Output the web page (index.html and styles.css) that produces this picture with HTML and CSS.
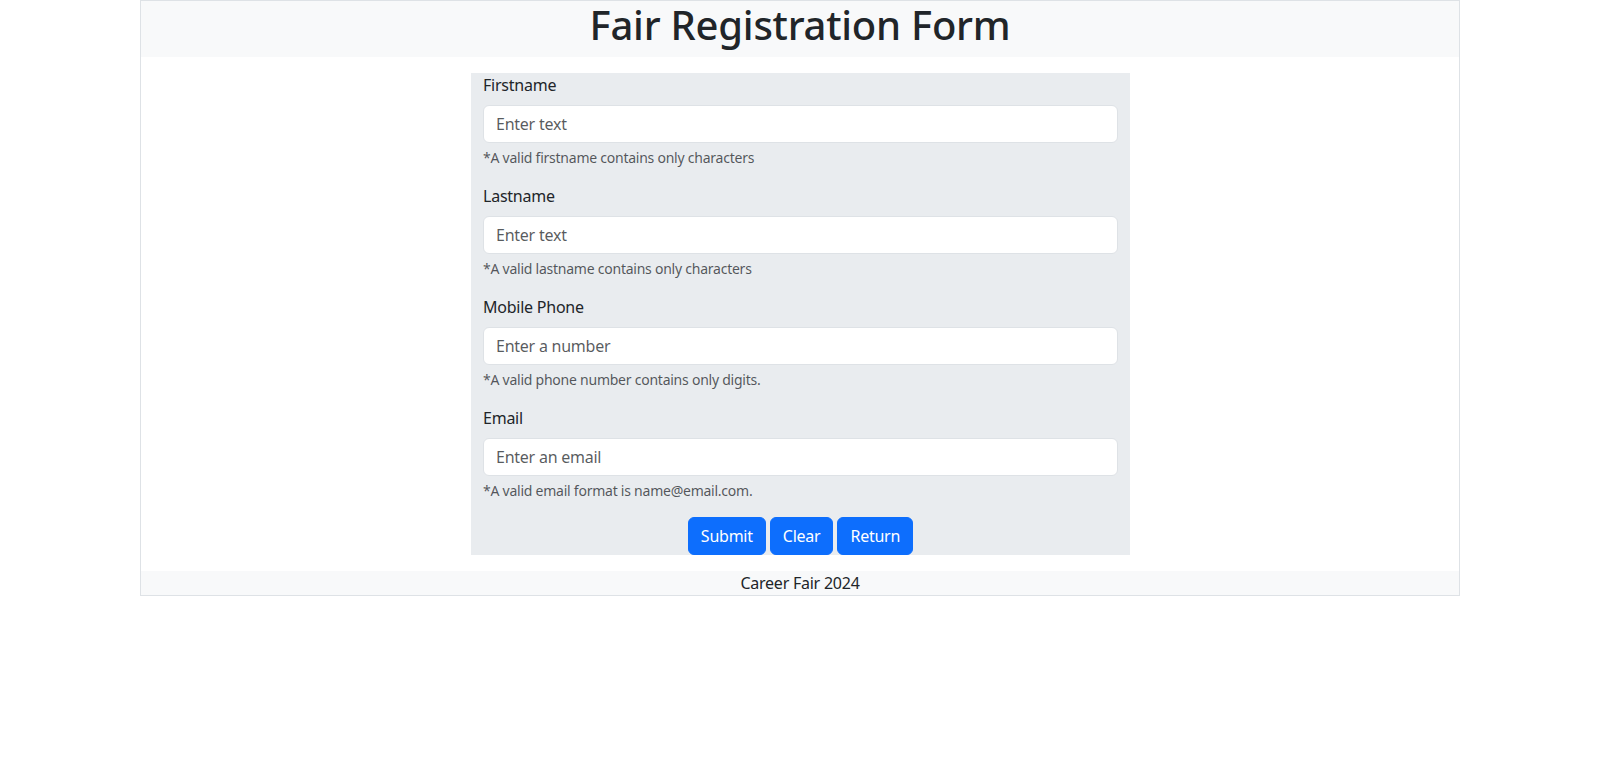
FILE: index.html
```html
<!DOCTYPE html>
<html lang="en">
<head>
<meta charset="utf-8">
<title>Fair Registration Form</title>
<link rel="stylesheet" href="styles.css">
</head>
<body>
<div class="container">
  <header class="header">
    <h1 class="title">Fair Registration Form</h1>
  </header>
  <main class="main">
    <form class="reg-form">
      <div class="group">
        <label class="form-label" for="fn">Firstname</label>
        <input class="form-control" id="fn" type="text" placeholder="Enter text">
        <div class="form-text">*A valid firstname contains only characters</div>
      </div>
      <div class="group">
        <label class="form-label" for="ln">Lastname</label>
        <input class="form-control" id="ln" type="text" placeholder="Enter text">
        <div class="form-text">*A valid lastname contains only characters</div>
      </div>
      <div class="group">
        <label class="form-label" for="ph">Mobile Phone</label>
        <input class="form-control" id="ph" type="text" placeholder="Enter a number">
        <div class="form-text">*A valid phone number contains only digits.</div>
      </div>
      <div class="group">
        <label class="form-label" for="em">Email</label>
        <input class="form-control" id="em" type="text" placeholder="Enter an email">
        <div class="form-text">*A valid email format is name@email.com.</div>
      </div>
      <div class="actions">
        <button type="button" class="btn">Submit</button>
        <button type="button" class="btn">Clear</button>
        <button type="button" class="btn">Return</button>
      </div>
    </form>
  </main>
  <footer class="footer">Career Fair 2024</footer>
</div>
</body>
</html>
```

FILE: styles.css
```css
* { box-sizing: border-box; }
html, body { margin: 0; padding: 0; }
body {
  font-family: "Noto Sans", "Open Sans", sans-serif;
  font-size: 16px;
  line-height: 1.5;
  letter-spacing: -0.015em;
  color: #212529;
  background: #fff;
}
.container {
  width: 1320px;
  margin: 0 auto;
  border: 1px solid #dee2e6;
}
.header {
  background: #f8f9fa;
  text-align: center;
  padding-bottom: 8px;
}
.title {
  margin: 0;
  font-size: 40px;
  font-weight: 500;
  line-height: 48px;
}
.main {
  display: flex;
  justify-content: center;
  padding: 16px 0;
}
.reg-form {
  width: 659px;
  margin-left: 1px;
  background: #e9ecef;
  padding: 0 12px;
}
.group { margin-bottom: 16px; }
.form-label {
  display: block;
  margin-bottom: 8px;
}
.form-control {
  display: block;
  width: 100%;
  height: 38px;
  padding: 6px 12px;
  font: inherit;
  letter-spacing: inherit;
  color: #212529;
  background: #fff;
  border: 1px solid #dee2e6;
  border-radius: 6px;
}
.form-control::placeholder { color: rgba(33, 37, 41, 0.75); }
.form-text {
  margin-top: 4px;
  font-size: 14px;
  line-height: 21px;
  color: rgba(33, 37, 41, 0.75);
}
.actions {
  display: flex;
  justify-content: center;
  gap: 4px;
}
.btn {
  height: 38px;
  padding: 6px 12px;
  font: inherit;
  letter-spacing: inherit;
  color: #fff;
  background: #0d6efd;
  border: 1px solid #0d6efd;
  border-radius: 6px;
}
.footer {
  background: #f8f9fa;
  text-align: center;
  line-height: 24px;
}
```
